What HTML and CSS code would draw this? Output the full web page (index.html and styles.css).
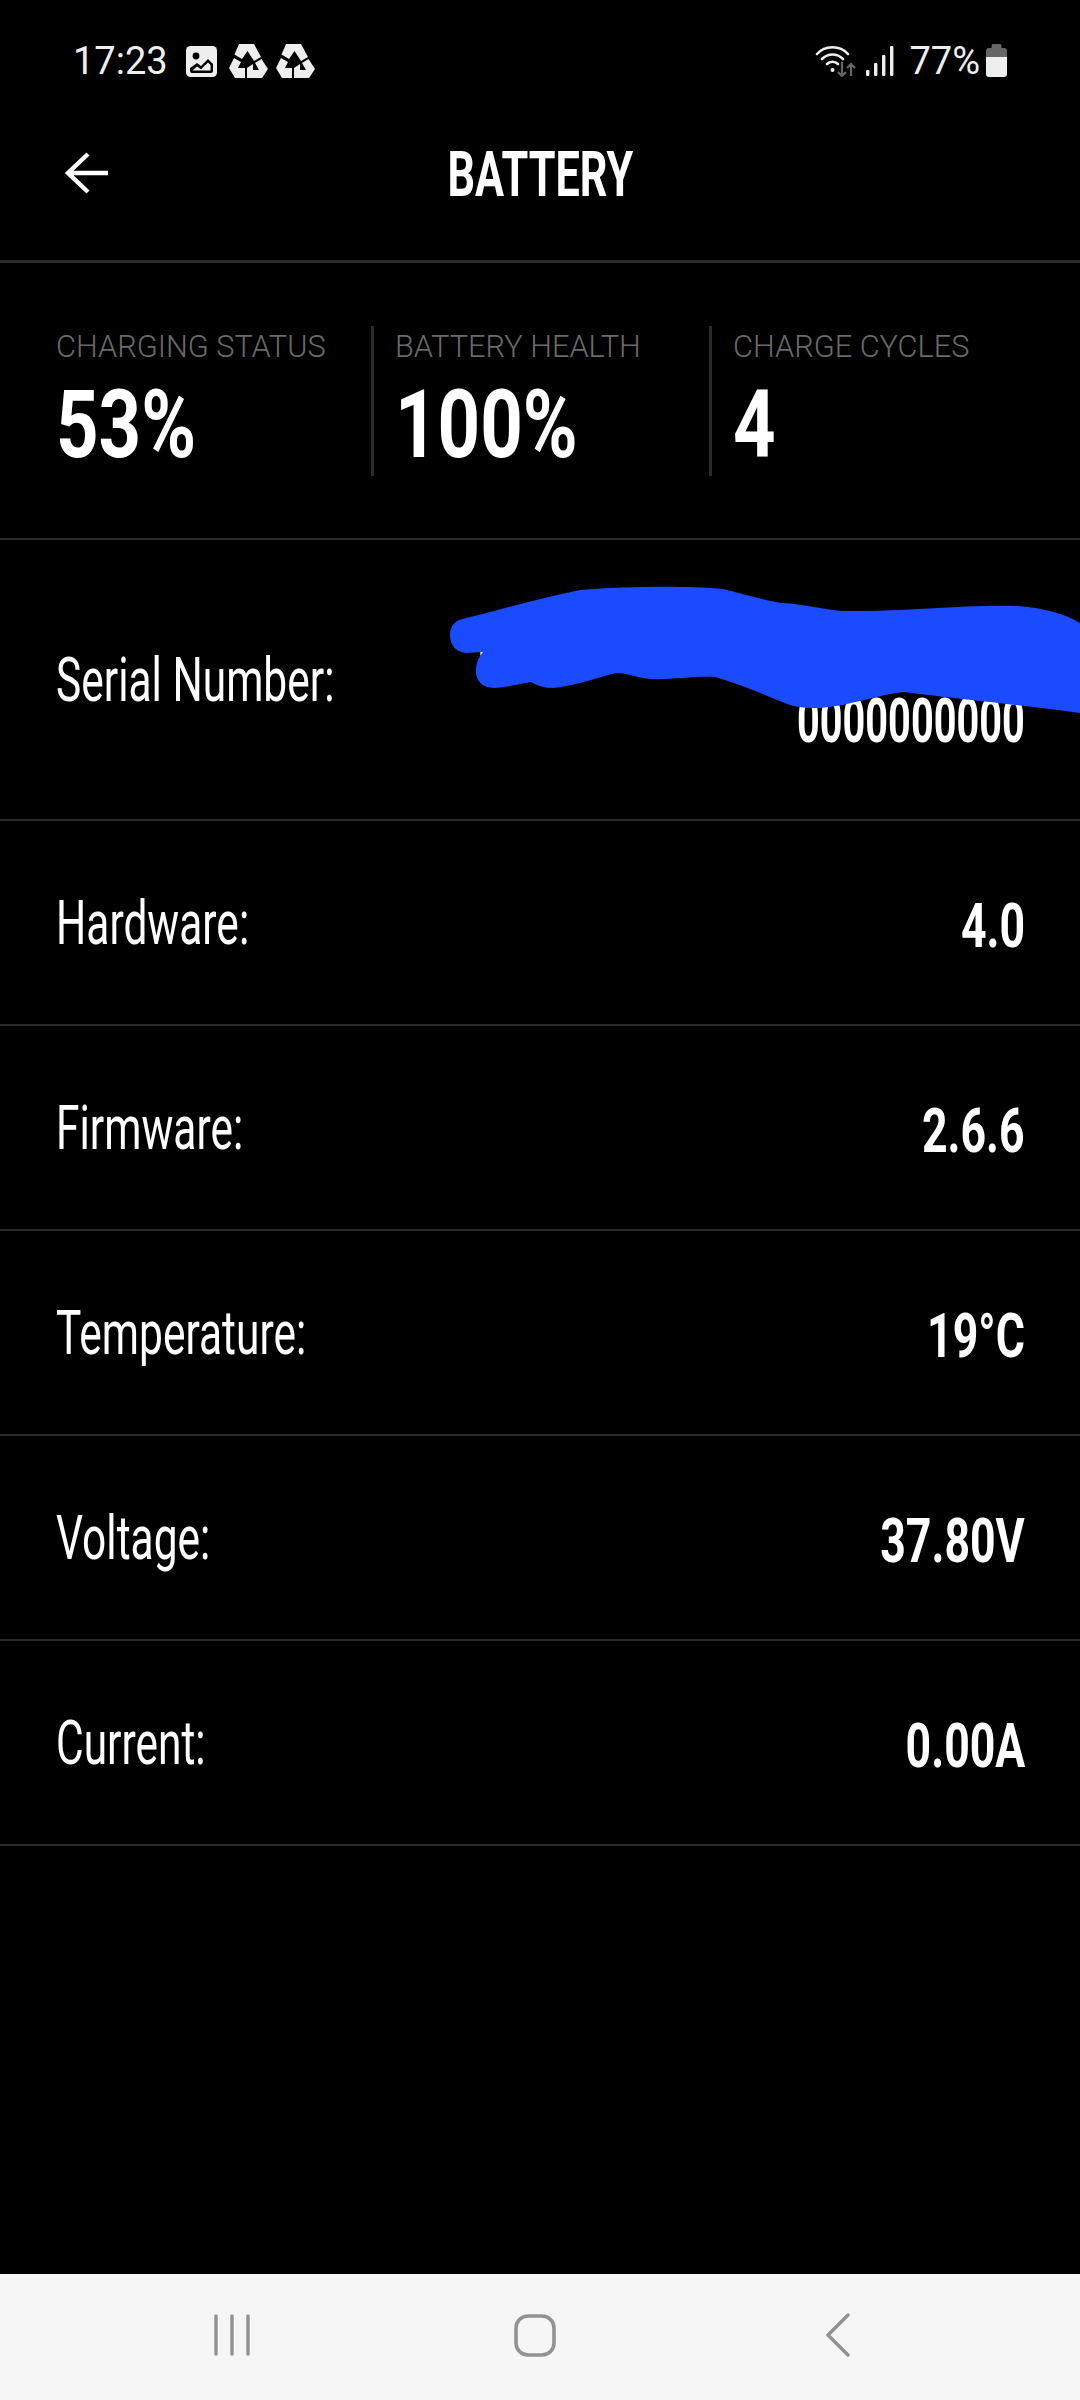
FILE: index.html
```html
<!DOCTYPE html>
<html lang="en">
<head>
    <meta charset="UTF-8">
    <title>Battery</title>
    <link rel="stylesheet" href="styles.css">
</head>
<body>
    <div class="screen">
        <div class="status-bar">
            <div class="status-left">
                <span class="clock">17:23</span>
                <svg class="ic-image" width="31" height="31" viewBox="0 0 31 31">
                    <rect width="31" height="31" rx="4.5" fill="#eee"/>
                    <circle cx="10" cy="10" r="3.4" fill="#000"/>
                    <path d="M4 25 L4 22 L11 17 L15 20 L22 13 L27 18 L27 25 Q27 27 25 27 L6 27 Q4 27 4 25 Z" fill="#000"/>
                    <path d="M6.5 24.6 L11 20.6 L15 23.2 L22 16.6 L24.6 19 L24.6 24.6 Z" fill="#eee"/>
                </svg>
                <svg class="ic-recycle" width="39" height="34" viewBox="0 0 39 34">
                    <path d="M10 0 H25 L32 13 L25 17 L18.5 7 L13 15 L5.5 10.5 Z M5 14 L12 18 L9 24 H16 V34 H6 L0 24 Z M32.5 15 L39 25 L33 34 H18 V24 L24 20 V26 H30 L26 19 Z" fill="#eee"/>
                </svg>
                <svg class="ic-recycle" width="39" height="34" viewBox="0 0 39 34">
                    <path d="M10 0 H25 L32 13 L25 17 L18.5 7 L13 15 L5.5 10.5 Z M5 14 L12 18 L9 24 H16 V34 H6 L0 24 Z M32.5 15 L39 25 L33 34 H18 V24 L24 20 V26 H30 L26 19 Z" fill="#eee"/>
                </svg>
            </div>
            <div class="status-right">
                <svg class="ic-wifi" width="42" height="32" viewBox="0 0 42 32">
                    <g fill="none" stroke="#eee" stroke-width="2.6" stroke-linecap="round">
                        <path d="M2 9 C10 0 25 0 33 9"/>
                        <path d="M7 14 C13 8 22 8 28 14"/>
                        <path d="M12 19 C15 16 20 16 23 19"/>
                    </g>
                    <circle cx="17.5" cy="25" r="2" fill="#eee"/>
                    <g fill="none" stroke="#666" stroke-width="2.2">
                        <path d="M27 17 V31 M23 27 L27 31 L31 27"/>
                        <path d="M36 31 V19 M32 23 L36 19 L40 23"/>
                    </g>
                </svg>
                <svg class="ic-signal" width="28" height="30" viewBox="0 0 28 30">
                    <g fill="#eee">
                        <rect x="0" y="24" width="3.4" height="6" rx="1.2"/>
                        <rect x="8" y="17" width="3.4" height="13" rx="1"/>
                        <rect x="16" y="9" width="3.4" height="21" rx="1"/>
                        <rect x="24" y="0" width="3.4" height="30" rx="1"/>
                    </g>
                </svg>
                <span class="battery-pct">77%</span>
                <svg class="ic-battery" width="21" height="33" viewBox="0 0 21 33">
                    <path d="M7 0 H14 Q15.5 0 15.5 2 V4 H18 Q21 4 21 7 V13 H0 V7 Q0 4 3 4 H5.5 V2 Q5.5 0 7 0 Z" fill="#666"/>
                    <path d="M0 13 H21 V30 Q21 33 18 33 H3 Q0 33 0 30 Z" fill="#eee"/>
                </svg>
            </div>
        </div>

        <div class="title-bar">
            <svg class="back-arrow" width="44" height="42" viewBox="0 0 44 42">
                <path d="M43 21 H3 M23 2 L3 21 L23 40" fill="none" stroke="#fff" stroke-width="4.4"/>
            </svg>
            <h1 class="title">BATTERY</h1>
        </div>

        <div class="stats">
            <div class="stat">
                <div class="stat-label">CHARGING STATUS</div>
                <div class="stat-value">53%</div>
            </div>
            <div class="stat">
                <div class="stat-label">BATTERY HEALTH</div>
                <div class="stat-value">100%</div>
            </div>
            <div class="stat">
                <div class="stat-label">CHARGE CYCLES</div>
                <div class="stat-value">4</div>
            </div>
        </div>

        <div class="info-list">
            <div class="info-row serial">
                <span class="info-label">Serial Number:</span>
                <span class="info-value">000000000000000000000000<br>0000000000</span>
            </div>
            <div class="info-row">
                <span class="info-label">Hardware:</span>
                <span class="info-value">4.0</span>
            </div>
            <div class="info-row">
                <span class="info-label">Firmware:</span>
                <span class="info-value">2.6.6</span>
            </div>
            <div class="info-row">
                <span class="info-label">Temperature:</span>
                <span class="info-value">19°C</span>
            </div>
            <div class="info-row">
                <span class="info-label">Voltage:</span>
                <span class="info-value">37.80V</span>
            </div>
            <div class="info-row">
                <span class="info-label">Current:</span>
                <span class="info-value">0.00A</span>
            </div>
        </div>

        <div class="nav-bar">
            <svg width="36" height="42" viewBox="0 0 36 42">
                <g stroke="#929292" stroke-width="3.4" stroke-linecap="round">
                    <path d="M2 2 V40 M18 2 V40 M34 2 V40"/>
                </g>
            </svg>
            <svg class="nav-home" width="42" height="43" viewBox="0 0 42 43">
                <rect x="2" y="2" width="38" height="39" rx="12" fill="none" stroke="#929292" stroke-width="3.6"/>
            </svg>
            <svg width="24" height="44" viewBox="0 0 24 44">
                <path d="M22 2 L2 22 L22 42" fill="none" stroke="#929292" stroke-width="3.4" stroke-linecap="round" stroke-linejoin="round"/>
            </svg>
        </div>

        <!-- blue marker scribble over the serial number -->
        <svg class="scribble" width="1080" height="2400" viewBox="0 0 1080 2400">
            <path d="M450 635 C450 625 456 620 466 618 C500 610 540 598 580 590 C630 586 690 586 723 589 C745 594 765 601 782 603 C805 604 820 609 841 611 C900 612 970 604 1018 606 C1045 608 1065 614 1080 623 L1080 713 C1030 706 950 698 904 692 C880 694 850 706 820 708 C810 708 800 708 790 705 C765 695 740 684 715 677 C695 676 670 680 651 679 C638 678 628 673 616 673 C595 678 575 686 553 688 C545 688 538 686 531 682 C518 684 505 688 494 688 C482 688 475 680 476 670 C476 664 478 658 483 652 L466 653 C456 652 450 645 450 635 Z" fill="#1a4bff"/>
        </svg>
    </div>
</body>
</html>
```

FILE: styles.css
```css
* {
    margin: 0;
    padding: 0;
    box-sizing: border-box;
}

body {
    background: #000;
    color: #fff;
    font-family: Roboto, "Liberation Sans", sans-serif;
}

.screen {
    position: relative;
    width: 1080px;
    height: 2400px;
    display: flex;
    flex-direction: column;
    overflow: hidden;
}

.status-bar {
    height: 80px;
    padding: 44px 73px 0 73px;
    display: flex;
    justify-content: space-between;
    align-items: flex-start;
    font-weight: 400;
    font-size: 38px;
    color: #eee;
}

.status-left, .status-right {
    display: flex;
    align-items: flex-start;
}

.clock, .battery-pct {
    line-height: 34px;
}

.ic-image {
    margin: 2px 12px 0 18px;
}

.ic-recycle {
    margin-right: 8px;
}

.ic-wifi {
    margin-top: 1px;
    margin-right: 9px;
}

.ic-signal {
    margin-top: 2px;
    margin-right: 15px;
}

.ic-battery {
    margin-left: 6px;
}

.title-bar {
    position: relative;
    height: 183px;
    border-bottom: 3px solid #2a2a2a;
    display: flex;
    align-items: center;
    justify-content: center;
    padding-top: 10px;
}

.back-arrow {
    position: absolute;
    left: 65px;
    top: 72px;
}

/* no condensed DIN here, so everything in the app font is Roboto squeezed */
.title {
    font-size: 63px;
    font-weight: 700;
    line-height: 70px;
    transform: scaleX(0.686);
}

.stats {
    height: 277px;
    padding-top: 63px;
    display: flex;
    align-items: flex-start;
    border-bottom: 2px solid #2a2a2a;
}

.stat {
    height: 150px;
    width: 338px;
    padding-left: 21px;
    border-left: 3px solid #2a2a2a;
}

.stat:first-child {
    width: 371px;
    padding-left: 56px;
    border-left: none;
}

.stat-label {
    font-size: 32px;
    font-weight: 300;
    line-height: 40px;
    color: #6a6a6a;
    white-space: nowrap;
    transform: scaleX(0.96);
    transform-origin: left center;
}

.stat-value {
    font-size: 94px;
    font-weight: 700;
    line-height: 100px;
    margin-top: 9px;
    transform: scaleX(0.79);
    transform-origin: left center;
}

.info-list {
    flex: 1;
}

.info-row {
    height: 205px;
    padding: 0 55px 0 56px;
    display: flex;
    align-items: center;
    border-bottom: 2px solid #2a2a2a;
}

.info-row.serial {
    height: 281px;
}

.info-label {
    flex: 0 0 0;
    min-width: 0;
    font-size: 62px;
    font-weight: 400;
    white-space: nowrap;
    transform: scaleX(0.685);
    transform-origin: left center;
}

.info-value {
    margin-left: auto;
    margin-top: 6px;
    font-size: 62px;
    font-weight: 700;
    text-align: right;
    line-height: 76px;
    transform: scaleX(0.72);
    transform-origin: right center;
}

.serial .info-value {
    transform: scaleX(0.64);
}

.nav-bar {
    height: 126px;
    padding: 0 230px 4px 214px;
    background: #f6f6f6;
    display: flex;
    align-items: center;
    justify-content: space-between;
}

.nav-home {
    margin-left: -6px;
}

.scribble {
    position: absolute;
    left: 0;
    top: 0;
}
```
